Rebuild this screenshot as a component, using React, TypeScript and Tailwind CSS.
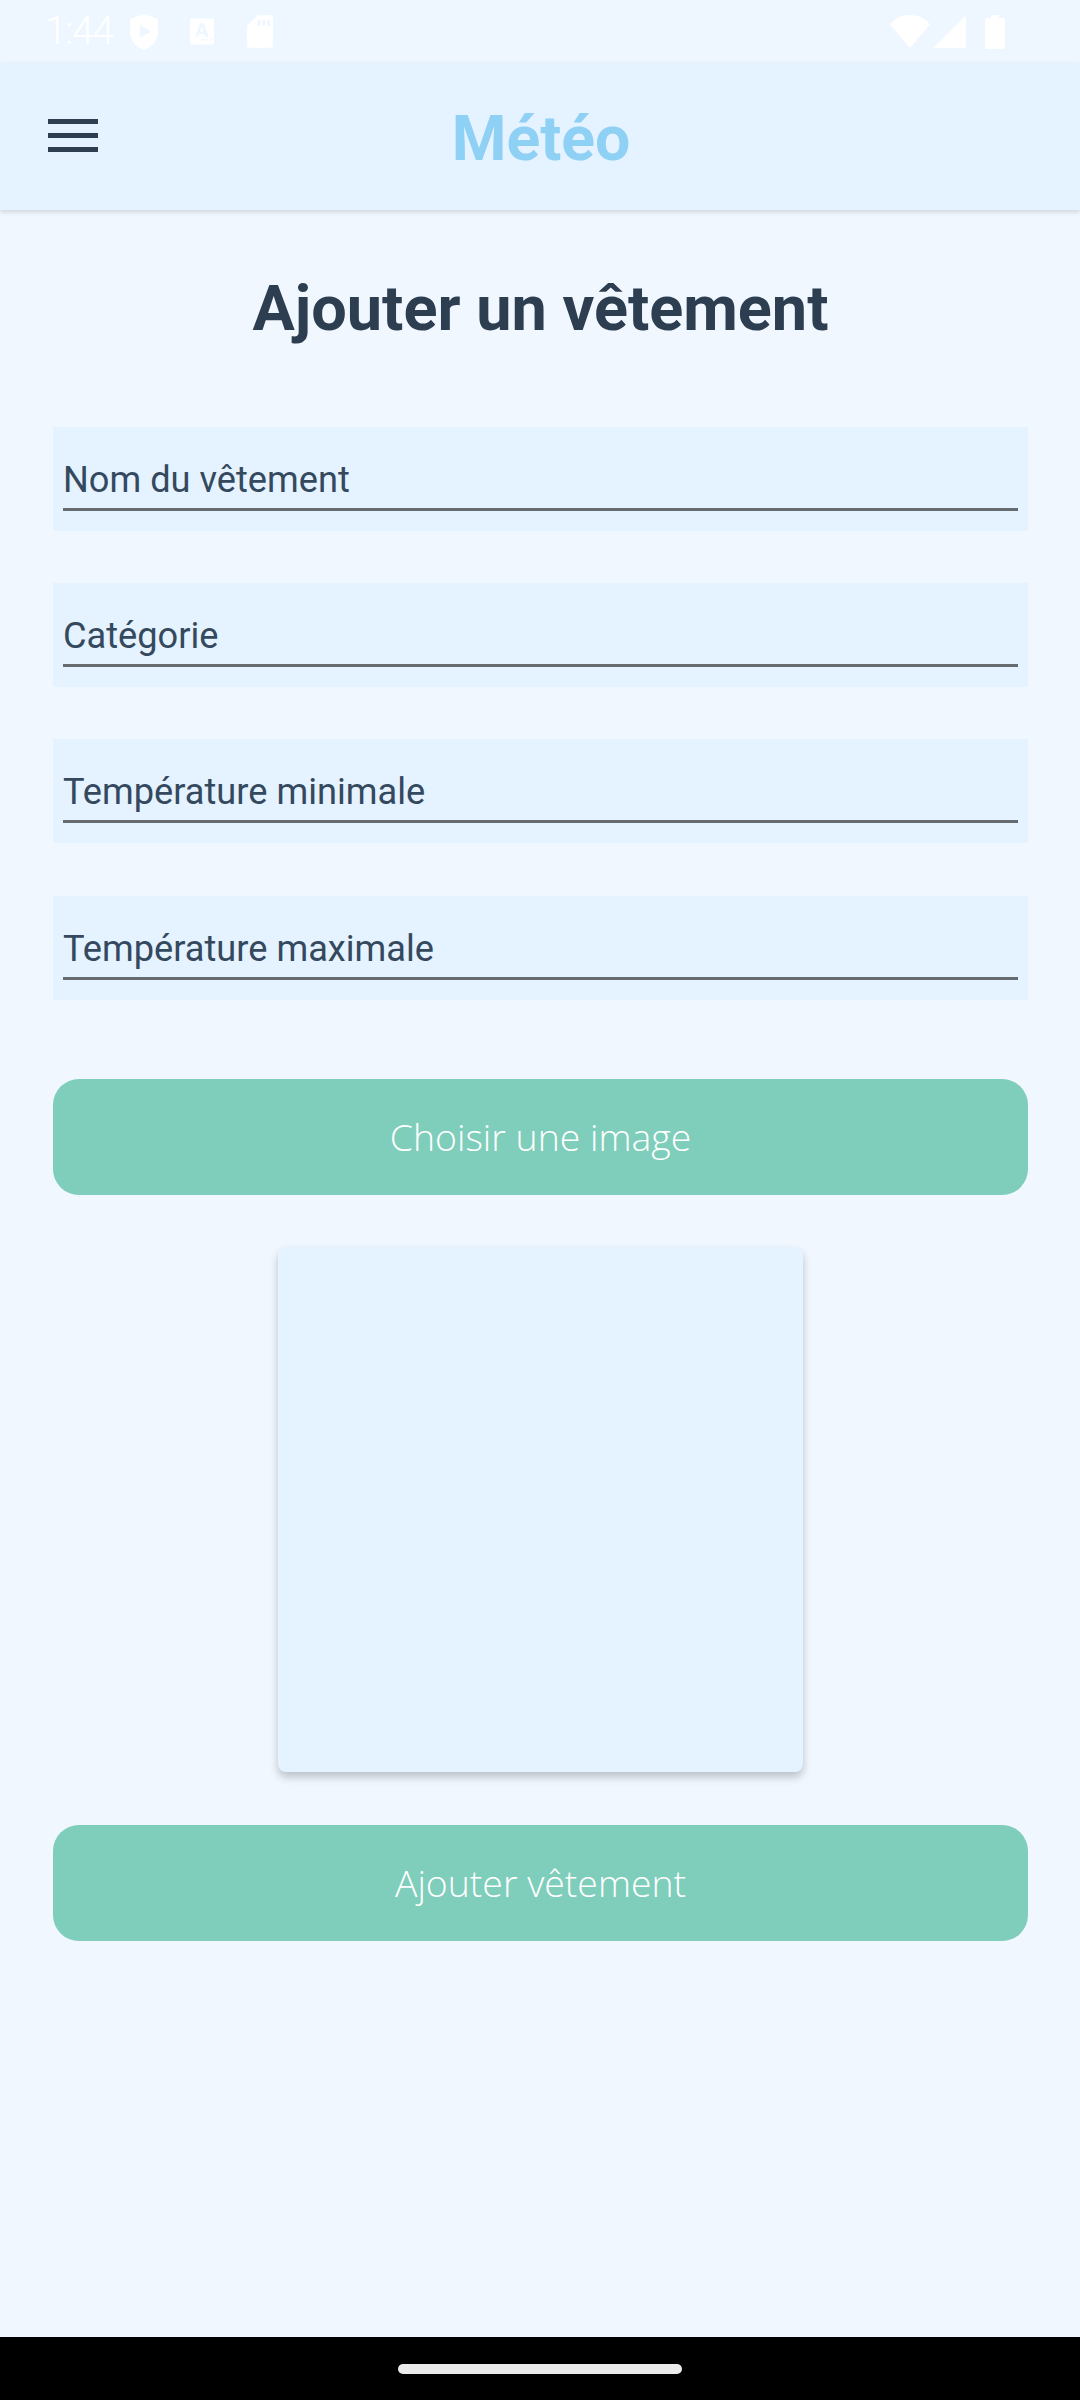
const fields = [
  "Nom du vêtement",
  "Catégorie",
  "Température minimale",
  "Température maximale",
];

function StatusBar() {
  return (
    <div className="flex h-[63px] items-center justify-between bg-[#eef7ff] pl-[45px] pr-[75px]">
      <div className="flex items-center">
        <span className="w-[69px] whitespace-nowrap font-['Roboto',sans-serif] text-[39px] font-light leading-none tracking-[-1.4px] text-white">1:44</span>
        <svg className="ml-[15px]" width="30" height="36" viewBox="0 0 30 36" fill="#fff">
          <path fillRule="evenodd" d="M15 0 L29 5 V18 C29 27 23 33 15 36 C7 33 1 27 1 18 V5 Z M11 11 V24 L22 17.5 Z" />
        </svg>
        <svg className="ml-[31px]" width="24" height="27" viewBox="0 0 25 27" fill="#fff">
          <path fillRule="evenodd" d="M1 0 H24 A1 1 0 0 1 25 1 V26 A1 1 0 0 1 24 27 H1 A1 1 0 0 1 0 26 V1 A1 1 0 0 1 1 0 Z M10.5 5 L5.5 19 H8.5 L9.6 16 H15.4 L16.5 19 H19.5 L14.5 5 Z M12.5 8.5 L14.5 13.5 H10.5 Z M13 21 V23 H15 V21 Z M17 21 V23 H19 V21 Z M21 21 V23 H23 V21 Z" />
        </svg>
        <svg className="ml-[33px]" width="26" height="33" viewBox="0 0 27 34" fill="#fff">
          <path fillRule="evenodd" d="M11 0 H24 A3 3 0 0 1 27 3 V31 A3 3 0 0 1 24 34 H3 A3 3 0 0 1 0 31 V11 Z M11 5 V11 H14 V5 Z M16 5 V11 H19 V5 Z M21 5 V11 H24 V5 Z" />
        </svg>
      </div>
      <div className="flex items-center">
        <svg width="40" height="33" viewBox="0 0 40 33" fill="#fff">
          <path d="M0 9.5 C5 3 12 0 20 0 C28 0 35 3 40 9.5 L20 33 Z" />
        </svg>
        <svg className="ml-[3px]" width="33" height="33" viewBox="0 0 33 33" fill="#fff">
          <path d="M33 0 V33 H0 Z" />
        </svg>
        <svg className="ml-[19px]" width="20" height="34" viewBox="0 0 20 34" fill="#fff">
          <path d="M6 0 H14 V3 H18 A2 2 0 0 1 20 5 V32 A2 2 0 0 1 18 34 H2 A2 2 0 0 1 0 32 V5 A2 2 0 0 1 2 3 H6 Z" />
        </svg>
      </div>
    </div>
  );
}

function Header() {
  return (
    <header className="relative z-10 flex h-[147px] items-center justify-center bg-[#e5f2ff] shadow-[0_2px_5px_rgba(0,0,0,0.14)]">
      <button className="absolute left-[48px] top-[56px] flex w-[50px] flex-col gap-[9px]">
        <span className="h-[5px] bg-[#2c3e50]" />
        <span className="h-[5px] bg-[#2c3e50]" />
        <span className="h-[5px] bg-[#2c3e50]" />
      </button>
      <h1 className="ml-[2px] pt-[5px] font-['Roboto',sans-serif] text-[62.5px] font-bold text-[#8fd0f5]">Météo</h1>
    </header>
  );
}

function Field({ label }: { label: string }) {
  return (
    <div className="h-[104px] bg-[#e5f2ff] px-[10px]">
      <div className="flex h-[84px] items-end border-b-[3px] border-[#666b70] pb-[6px]">
        <span className="font-['Roboto',sans-serif] text-[36.2px] leading-[44px] text-[#34495e]">{label}</span>
      </div>
    </div>
  );
}

function GreenButton({ children }: { children: string }) {
  return (
    <button className="flex h-[116px] w-full items-center justify-center rounded-[26px] bg-[#7fcdbb] font-['Open_Sans',sans-serif] text-[37.4px] font-[350] text-white">
      {children}
    </button>
  );
}

export default function App() {
  return (
    <div className="flex min-h-[2400px] flex-col bg-[#f0f7ff]">
      <StatusBar />
      <Header />
      <main className="flex flex-1 flex-col pl-[53px] pr-[52px] pt-[62px]">
        <h2 className="mb-[81px] text-center font-['Roboto',sans-serif] text-[63px] font-bold leading-[74px] text-[#2c3e50]">
          Ajouter un vêtement
        </h2>
        <div className="flex flex-col gap-[52.2px]">
          {fields.map((f) => (
            <Field key={f} label={f} />
          ))}
        </div>
        <div className="mt-[79.4px]">
          <GreenButton>Choisir une image</GreenButton>
        </div>
        <div className="mx-auto mb-[53px] mt-[52px] h-[525px] w-[525px] rounded-[8px] bg-[#e5f2ff] shadow-[0_5px_9px_rgba(0,0,0,0.22)]" />
        <GreenButton>Ajouter vêtement</GreenButton>
      </main>
      <div className="flex h-[63px] justify-center bg-black pt-[27px]">
        <div className="h-[10px] w-[284px] rounded-full bg-[#ebebeb]" />
      </div>
    </div>
  );
}
